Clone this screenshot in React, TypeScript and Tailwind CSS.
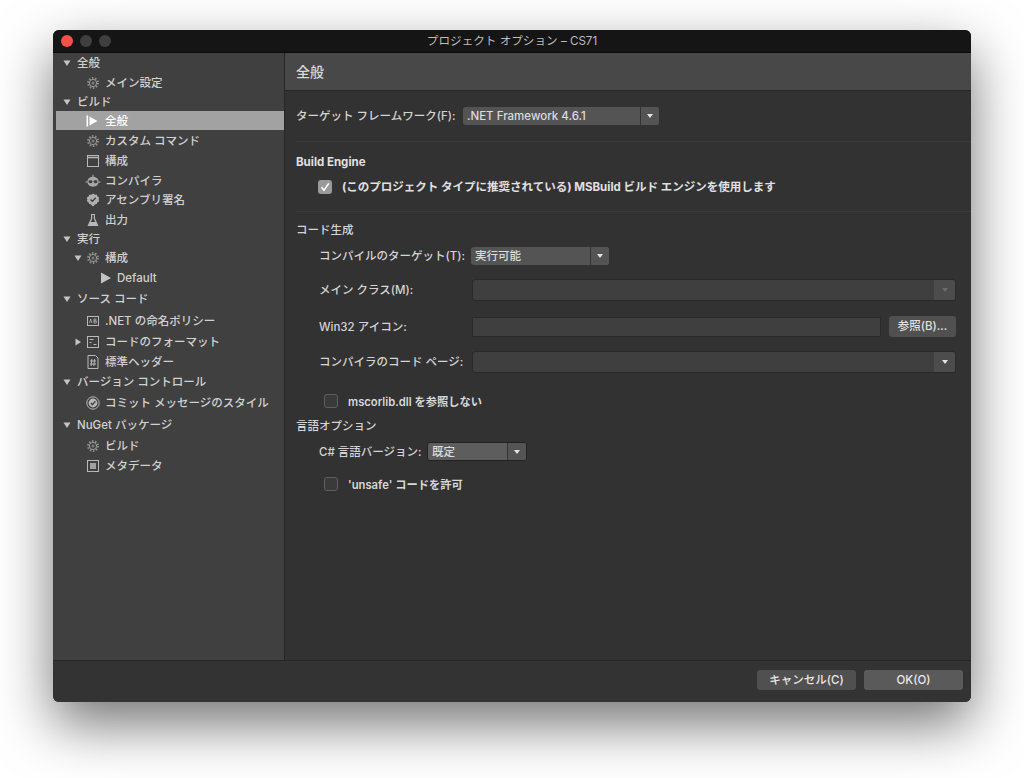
import React from 'react';

const FONT = "font-['Inter','Noto_Sans_CJK_JP',sans-serif]";

// small drawn icons for the options tree
function Tri({ open = true, className = '' }: { open?: boolean; className?: string }) {
  return (
    <svg width="8" height="8" viewBox="0 0 8 8" className={className}>
      {open ? <path d="M0.5 1.5h7L4 7z" fill="#c4c4c4" /> : <path d="M1.5 0.5v7L7 4z" fill="#c4c4c4" />}
    </svg>
  );
}

function Gear() {
  return (
    <svg width="14" height="14" viewBox="0 0 14 14" fill="none">
      <circle cx="7" cy="7" r="4.9" stroke="#8e8e8e" strokeWidth="2" strokeDasharray="1.5 1.57" />
      <circle cx="7" cy="7" r="3.6" stroke="#9a9a9a" strokeWidth="1" />
      <circle cx="7" cy="7" r="1.5" fill="#7c7c7c" />
    </svg>
  );
}

function NavIcon({ name }: { name: string }) {
  const c = '#b8b8b8';
  const base = { width: 14, height: 14, viewBox: '0 0 14 14', fill: 'none', stroke: c, strokeWidth: 1 };
  switch (name) {
    case 'gear':
      return <Gear />;
    case 'run':
      return (
        <svg {...base} stroke="none">
          <rect x="0.5" y="1.5" width="1.6" height="11" fill="#fff" />
          <path d="M3.5 2.5v9L11.5 7z" fill="#fff" />
        </svg>
      );
    case 'window':
      return (
        <svg {...base}>
          <rect x="1.5" y="1.5" width="11" height="11" />
          <path d="M1.5 3.5h11" strokeWidth="1.6" />
        </svg>
      );
    case 'robot':
      return (
        <svg width="16" height="14" viewBox="0 0 16 14" fill="none" stroke={c} className="-ml-[1px] -mr-[1px]">
          <ellipse cx="8" cy="7.8" rx="5.6" ry="5" fill="#a8a8a8" stroke="none" />
          <path d="M0.5 8h2M13.5 8h2M8 0.8v2.4" />
          <rect x="3.6" y="6.2" width="3.8" height="3" rx="1.4" fill="#3f3f3f" stroke="none" />
          <rect x="8.6" y="6.2" width="3.8" height="3" rx="1.4" fill="#3f3f3f" stroke="none" />
        </svg>
      );
    case 'badge':
      return (
        <svg {...base}>
          <path d="M7 0.6l1.7 1.1 2-.1.8 1.8 1.7 1-.6 1.9.6 1.9-1.7 1-.8 1.7-1.4.3L7 13.4l-2.3-2.1-1.4-.3-.8-1.7-1.7-1 .6-1.9-.6-1.9 1.7-1 .8-1.8 2 .1z" fill="#b0b0b0" stroke="none" />
          <path d="M4.5 6.4L6.4 8.3 9.8 4.8" stroke="#3f3f3f" strokeWidth="1.4" />
        </svg>
      );
    case 'flask':
      return (
        <svg {...base}>
          <path d="M5 1.5h4M5.6 1.5v4L2.4 12.5h9.2L8.4 5.5v-4" strokeWidth="1.2" />
          <path d="M4.2 9h5.6l1.3 3H2.9z" fill="#b8b8b8" stroke="none" />
        </svg>
      );
    case 'ab':
      return (
        <svg {...base}>
          <rect x="1.5" y="2.5" width="11" height="9" />
          <path d="M3.5 9l1.2-4 1.2 4M8 5v4h1.6a1 1 0 000-2H8m0 0h1.2a1 1 0 000-2H8" strokeWidth="0.8" />
        </svg>
      );
    case 'format':
      return (
        <svg {...base}>
          <rect x="1.5" y="1.5" width="11" height="11" />
          <path d="M3.5 4.5h4M3.5 7.5h2M7.5 9.5h3" />
        </svg>
      );
    case 'hash':
      return (
        <svg {...base}>
          <path d="M2 0.5h7.5L12 3v10.5H2z" />
          <path d="M5.8 4l-.7 7M8.6 4l-.7 7M4 6h6M4 9h6" />
        </svg>
      );
    case 'commit':
      return (
        <svg {...base}>
          <circle cx="7" cy="7" r="6.2" />
          <circle cx="7" cy="7" r="4.4" fill="#b8b8b8" stroke="none" />
          <path d="M4.8 7l1.6 1.7 3-3.4" stroke="#3f3f3f" strokeWidth="1.3" />
        </svg>
      );
    case 'meta':
      return (
        <svg {...base}>
          <rect x="1.5" y="1.5" width="11" height="11" />
          <rect x="4" y="4" width="6" height="6" fill="#a0a0a0" stroke="none" />
        </svg>
      );
    default:
      return null;
  }
}

type Row = {
  label: string;
  h: string;
  kind: 'head' | 'item';
  icon?: string;
  tri?: 'open' | 'closed';
  selected?: boolean;
};

const rows: Row[] = [
  { label: '全般', h: 'h-[20px]', kind: 'head' },
  { label: 'メイン設定', h: 'h-[19px]', kind: 'item', icon: 'gear' },
  { label: 'ビルド', h: 'h-[19px]', kind: 'head' },
  { label: '全般', h: 'h-[19px]', kind: 'item', icon: 'run', selected: true },
  { label: 'カスタム コマンド', h: 'h-[21px]', kind: 'item', icon: 'gear' },
  { label: '構成', h: 'h-[20px]', kind: 'item', icon: 'window' },
  { label: 'コンパイラ', h: 'h-[19px]', kind: 'item', icon: 'robot' },
  { label: 'アセンブリ署名', h: 'h-[20px]', kind: 'item', icon: 'badge' },
  { label: '出力', h: 'h-[19px]', kind: 'item', icon: 'flask' },
  { label: '実行', h: 'h-[19px]', kind: 'head' },
  { label: '構成', h: 'h-[19px]', kind: 'item', icon: 'gear', tri: 'open' },
  { label: 'Default', h: 'h-[21px]', kind: 'item', icon: 'default' },
  { label: 'ソース コード', h: 'h-[22px]', kind: 'head' },
  { label: '.NET の命名ポリシー', h: 'h-[22px]', kind: 'item', icon: 'ab' },
  { label: 'コードのフォーマット', h: 'h-[20px]', kind: 'item', icon: 'format', tri: 'closed' },
  { label: '標準ヘッダー', h: 'h-[19px]', kind: 'item', icon: 'hash' },
  { label: 'バージョン コントロール', h: 'h-[21px]', kind: 'head' },
  { label: 'コミット メッセージのスタイル', h: 'h-[22px]', kind: 'item', icon: 'commit' },
  { label: 'NuGet パッケージ', h: 'h-[22px]', kind: 'head' },
  { label: 'ビルド', h: 'h-[20px]', kind: 'item', icon: 'gear' },
  { label: 'メタデータ', h: 'h-[19px]', kind: 'item', icon: 'meta' },
];

function SideRow({ row }: { row: Row }) {
  if (row.kind === 'head') {
    return (
      <div className={`${row.h} flex items-center pl-[10px] text-[11.5px] font-medium text-[#d0d0d0]`}>
        <Tri />
        <span className="ml-[6px] translate-y-[1px]">{row.label}</span>
      </div>
    );
  }
  if (row.icon === 'default') {
    return (
      <div className={`${row.h} flex items-center pl-[48px] text-[11.5px] font-medium text-[#d0d0d0]`}>
        <svg width="10" height="12" viewBox="0 0 10 12">
          <path d="M0 0.5v11L10 6z" fill="#c4c4c4" />
        </svg>
        <span className="ml-[6px] translate-y-[0.5px]">{row.label}</span>
      </div>
    );
  }
  return (
    <div
      className={`${row.h} relative flex items-center text-[11.5px] font-medium ${
        row.selected ? 'ml-[3px] bg-[#a2a2a2] pl-[30px] text-white' : 'pl-[33px] text-[#d0d0d0]'
      }`}
    >
      {row.tri && (
        <span className="absolute left-[21px] flex items-center">
          <Tri open={row.tri === 'open'} />
        </span>
      )}
      <NavIcon name={row.icon as string} />
      <span className="ml-[5px] translate-y-[0.5px] whitespace-nowrap">{row.label}</span>
    </div>
  );
}

function Combo({ width, height, split, text, disabled, outlined, brightArrow }: { width: string; height: string; split: string; text?: string; disabled?: boolean; outlined?: boolean; brightArrow?: boolean }) {
  return (
    <div
      className={`${width} ${height} flex overflow-hidden rounded-[3px] ${
        disabled ? 'border border-[#2a2a2a] bg-[#3f3f3f]' : outlined ? 'border border-[#222222] bg-[#5d5d5d]' : 'bg-[#545454]'
      }`}
    >
      <div className="flex min-w-0 flex-1 items-center pl-[4px] text-[11.5px] font-medium text-[#dcdcdc]">
        <span className="translate-y-[1px]">{text}</span>
      </div>
      <div className={`${split} flex items-center justify-center border-l ${disabled ? 'border-[#3f3f3f] bg-[#4c4c4c]' : 'border-[#333333] bg-[#545454]'}`}>
        <svg width="8" height="6" viewBox="0 0 8 6">
          <path d="M1 1h6L4 5z" fill={disabled && !brightArrow ? '#6a6a6a' : '#e4e4e4'} />
        </svg>
      </div>
    </div>
  );
}

function Check({ checked }: { checked?: boolean }) {
  if (checked) {
    return (
      <span className="flex h-[14px] w-[14px] items-center justify-center rounded-[3px] bg-[#9a9a9a]">
        <svg width="12" height="12" viewBox="0 0 12 12" fill="none">
          <path d="M2.5 6.2L5 9.2 9.8 2.4" stroke="#ffffff" strokeWidth="1.6" />
        </svg>
      </span>
    );
  }
  return <span className="h-[14px] w-[14px] rounded-[3px] border border-[#5f5f5f] bg-[#3a3a3a]" />;
}

function Divider() {
  return <div className="ml-[11px] h-px bg-[#3a3a3a]" />;
}

const label = 'translate-y-[1px] text-[11.5px] font-medium whitespace-nowrap text-[#d4d4d4]';
const labelSmall = 'translate-y-[1px] text-[11.25px] font-semibold whitespace-nowrap text-[#d8d8d8]';
const labelBold = 'translate-y-[1px] text-[11.5px] font-bold whitespace-nowrap text-[#e0e0e0]';

export default function App() {
  return (
    <div className={`${FONT} min-h-[778px] w-full overflow-hidden bg-white pl-[53px] pt-[30px]`}>
      <div className="flex h-[672px] w-[918px] flex-col overflow-hidden rounded-[6px] bg-[#323232] shadow-[0_22px_55px_rgba(0,0,0,0.55)]">
        {/* Title bar */}
        <div className="relative flex h-[23px] shrink-0 items-center justify-center border-b border-[#0b0b0b] bg-[#151515]">
          <div className="absolute left-[8px] flex gap-[7px]">
            <span className="h-[12px] w-[12px] rounded-full bg-[#f5504a]" />
            <span className="h-[12px] w-[12px] rounded-full bg-[#3f3f3f]" />
            <span className="h-[12px] w-[12px] rounded-full bg-[#3f3f3f]" />
          </div>
          <span className="translate-y-[1px] text-[11.6px] text-[#bdbdbd]">プロジェクト オプション – CS71</span>
        </div>

        <div className="flex min-h-0 flex-1">
          {/* Sidebar */}
          <div className="w-[232px] shrink-0 border-r border-[#262626] bg-[#404040]">
            {rows.map((r, i) => (
              <SideRow key={i} row={r} />
            ))}
          </div>

          {/* Options panel */}
          <div className="min-w-0 flex-1">
            <div className="flex h-[38px] items-center border-b border-[#262626] bg-[#484848] pl-[11px] text-[14px] font-medium text-[#d8d8d8]">
              全般
            </div>

            <div className="mt-[16px] flex h-[18px] items-center pl-[11px]">
              <span className={label}>ターゲット フレームワーク(F):</span>
              <div className="ml-auto mr-[312px]">
                <Combo width="w-[196px]" height="h-[18px]" split="w-[19px]" text=".NET Framework 4.6.1" />
              </div>
            </div>

            <div className="mt-[16px]">
              <Divider />
            </div>

            <div className={`mt-[12px] flex h-[16px] items-center pl-[11px] ${labelBold}`}>Build Engine</div>

            <div className="mt-[10px] flex h-[14px] items-center pl-[33px]">
              <Check checked />
              <span className={`ml-[10px] ${labelBold}`}>
                (このプロジェクト タイプに推奨されている) MSBuild ビルド エンジンを使用します
              </span>
            </div>

            <div className="mt-[17px]">
              <Divider />
            </div>

            <div className={`mt-[10px] flex h-[16px] items-center pl-[11px] ${label}`}>コード生成</div>

            <div className="mt-[9px] flex h-[18px] items-center pl-[34px]">
              <span className={`w-[152px] ${label}`}>コンパイルのターゲット(T):</span>
              <Combo width="w-[138px]" height="h-[18px]" split="w-[19px]" text="実行可能" />
            </div>

            <div className="mt-[14px] flex h-[22px] items-center pl-[34px] pr-[15px]">
              <span className={`w-[153px] ${label}`}>メイン クラス(M):</span>
              <div className="flex-1">
                <Combo width="w-full" height="h-[22px]" split="w-[22px]" disabled />
              </div>
            </div>

            <div className="mt-[15px] flex h-[21px] items-center pl-[34px] pr-[15px]">
              <span className={`w-[153px] ${label}`}>Win32 アイコン:</span>
              <div className="h-[20px] flex-1 border border-[#2a2a2a] bg-[#3f3f3f]" />
              <button className="ml-[8px] h-[21px] w-[67px] rounded-[3px] bg-[#505050] pt-[1px] text-[11.5px] font-medium text-[#e0e0e0]">参照(B)...</button>
            </div>

            <div className="mt-[14px] flex h-[22px] items-center pl-[34px] pr-[15px]">
              <span className={`w-[153px] ${label}`}>コンパイラのコード ページ:</span>
              <div className="flex-1">
                <Combo width="w-full" height="h-[22px]" split="w-[22px]" disabled brightArrow />
              </div>
            </div>

            <div className="mt-[21px] flex h-[14px] items-center pl-[39px]">
              <Check />
              <span className={`ml-[10px] ${labelSmall}`}>mscorlib.dll を参照しない</span>
            </div>

            <div className={`mt-[10px] flex h-[16px] items-center pl-[11px] ${label}`}>言語オプション</div>

            <div className="mt-[8px] flex h-[19px] items-center pl-[34px]">
              <span className={`w-[108px] ${label}`}>C# 言語バージョン:</span>
              <Combo width="w-[100px]" height="h-[19px]" split="w-[19px]" text="既定" outlined />
            </div>

            <div className="mt-[16px] flex h-[14px] items-center pl-[39px]">
              <Check />
              <span className={`ml-[10px] ${labelSmall}`}>'unsafe' コードを許可</span>
            </div>
          </div>
        </div>

        {/* Footer */}
        <div className="flex h-[42px] shrink-0 items-start justify-end gap-[8px] border-t border-[#262626] bg-[#333333] pr-[8px] pt-[9px]">
          <button className="h-[20px] w-[99px] rounded-[3px] bg-[#505050] pt-[1px] text-[11.5px] font-medium text-[#e8e8e8]">キャンセル(C)</button>
          <button className="h-[20px] w-[99px] rounded-[3px] bg-[#5a5a5a] pt-[1px] text-[11.5px] font-medium text-[#e8e8e8]">OK(O)</button>
        </div>
      </div>
    </div>
  );
}
